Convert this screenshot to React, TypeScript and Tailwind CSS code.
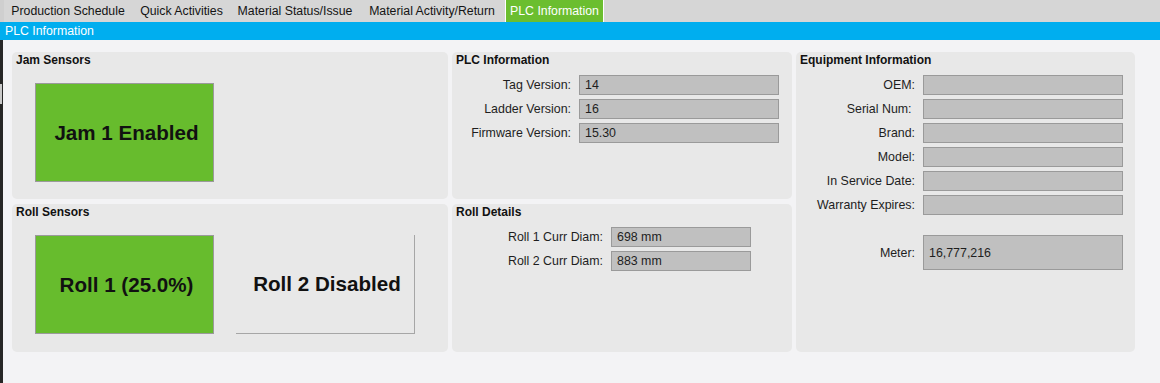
import React from "react";

const font = { fontFamily: '"Liberation Sans", Arial, sans-serif' };

function Field({ label, value = "", labelW, inputW, h = 20 }: { label: string; value?: string; labelW: number; inputW: number; h?: number }) {
  return (
    <div className="flex items-center">
      <div className="text-right text-[12.4px] leading-[14px] text-[#1e1e1e] whitespace-pre" style={{ width: labelW }}>
        {label}
      </div>
      <div
        className="ml-[8px] flex items-center border border-[#9a9a9a] bg-[#c0c0c0] pl-[5px] text-[12.4px] leading-[14px] text-[#1e1e1e]"
        style={{ width: inputW, height: h }}
      >
        {value}
      </div>
    </div>
  );
}

function Panel({ title, children, className = "" }: { title: string; children?: React.ReactNode; className?: string }) {
  return (
    <div className={`rounded-[5px] bg-[#e8e8e8] ${className}`}>
      <div className="pl-[4px] pt-[1px] text-[12px] font-bold leading-[14px] text-[#111]">{title}</div>
      {children}
    </div>
  );
}

export default function App() {
  const tabs = [
    { t: "Production Schedule", w: 128 },
    { t: "Quick Activities", w: 99 },
    { t: "Material Status/Issue", w: 128 },
    { t: "Material Activity/Return", w: 146 },
  ];
  return (
    <div className="flex min-h-screen w-[1160px] flex-col bg-[#f3f3f5]" style={font}>
      {/* tab bar */}
      <div className="flex h-[22px] bg-[#d6d6d6]">
        <div className="w-[4px] bg-[#cfcfcf]" />
        {tabs.map((x) => (
          <div
            key={x.t}
            className="flex items-center justify-center text-[12.3px] leading-[14px] text-[#141414]"
            style={{ width: x.w }}
          >
            {x.t}
          </div>
        ))}
        <div className="flex w-[99px] items-start justify-center border-x border-white bg-[#6bbe2f] pt-[4px] text-[12.3px] leading-[14px] text-white">
          PLC Information
        </div>
      </div>
      {/* title bar */}
      <div className="flex h-[18px] items-center bg-[#00aeef] pl-[5px] text-[12.3px] leading-[14px] text-white">
        PLC Information
      </div>
      {/* body */}
      <div className="flex flex-1">
        <div className="w-[3px] bg-[#262626]">
          <div className="mt-[44px] h-[20px] w-[2px] bg-[#c9c9c9]" />
        </div>
        <div className="flex-1 pl-[9px] pt-[12px]">
          <div className="grid grid-cols-[436px_340px_339px] grid-rows-[147px_148px] gap-x-[4px] gap-y-[5px]">
            <Panel title="Jam Sensors">
              <div className="mt-[16px] flex pl-[23px]">
                <div className="flex h-[99px] w-[179px] items-center justify-center border border-[#9a9a9a] bg-[#67bc2d] pl-[4px] text-[20.6px] font-bold leading-[24px] text-[#111]">
                  Jam 1 Enabled
                </div>
              </div>
            </Panel>
            <Panel title="PLC Information">
              <div className="mt-[8px] flex flex-col gap-[4px]">
                <Field label="Tag Version:" value="14" labelW={119} inputW={200} />
                <Field label="Ladder Version:" value="16" labelW={119} inputW={200} />
                <Field label="Firmware Version:" value="15.30" labelW={119} inputW={200} />
              </div>
            </Panel>
            <Panel title="Equipment Information" className="row-span-2">
              <div className="mt-[8px] flex flex-col gap-[4px]">
                <Field label="OEM:" labelW={119} inputW={200} />
                <Field label={"Serial Num: "} labelW={119} inputW={200} />
                <Field label="Brand:" labelW={119} inputW={200} />
                <Field label="Model:" labelW={119} inputW={200} />
                <Field label="In Service Date:" labelW={119} inputW={200} />
                <Field label="Warranty Expires:" labelW={119} inputW={200} />
              </div>
              <div className="mt-[20px]">
                <Field label="Meter:" value="16,777,216" labelW={119} inputW={200} h={35} />
              </div>
            </Panel>
            <Panel title="Roll Sensors">
              <div className="mt-[16px] flex gap-[22px] pl-[23px]">
                <div className="flex h-[99px] w-[179px] items-center justify-center border border-[#9a9a9a] bg-[#67bc2d] pl-[4px] text-[20.6px] font-bold leading-[24px] text-[#111]">
                  Roll 1 (25.0%)
                </div>
                <div className="flex h-[99px] w-[179px] items-center justify-center border-b border-r border-[#a6a6a6] pl-[4px] text-[20.6px] font-bold leading-[24px] text-[#111]">
                  Roll 2 Disabled
                </div>
              </div>
            </Panel>
            <Panel title="Roll Details">
              <div className="mt-[8px] flex flex-col gap-[4px]">
                <Field label="Roll 1 Curr Diam:" value="698 mm" labelW={151} inputW={140} />
                <Field label="Roll 2 Curr Diam:" value="883 mm" labelW={151} inputW={140} />
              </div>
            </Panel>
          </div>
        </div>
      </div>
    </div>
  );
}
